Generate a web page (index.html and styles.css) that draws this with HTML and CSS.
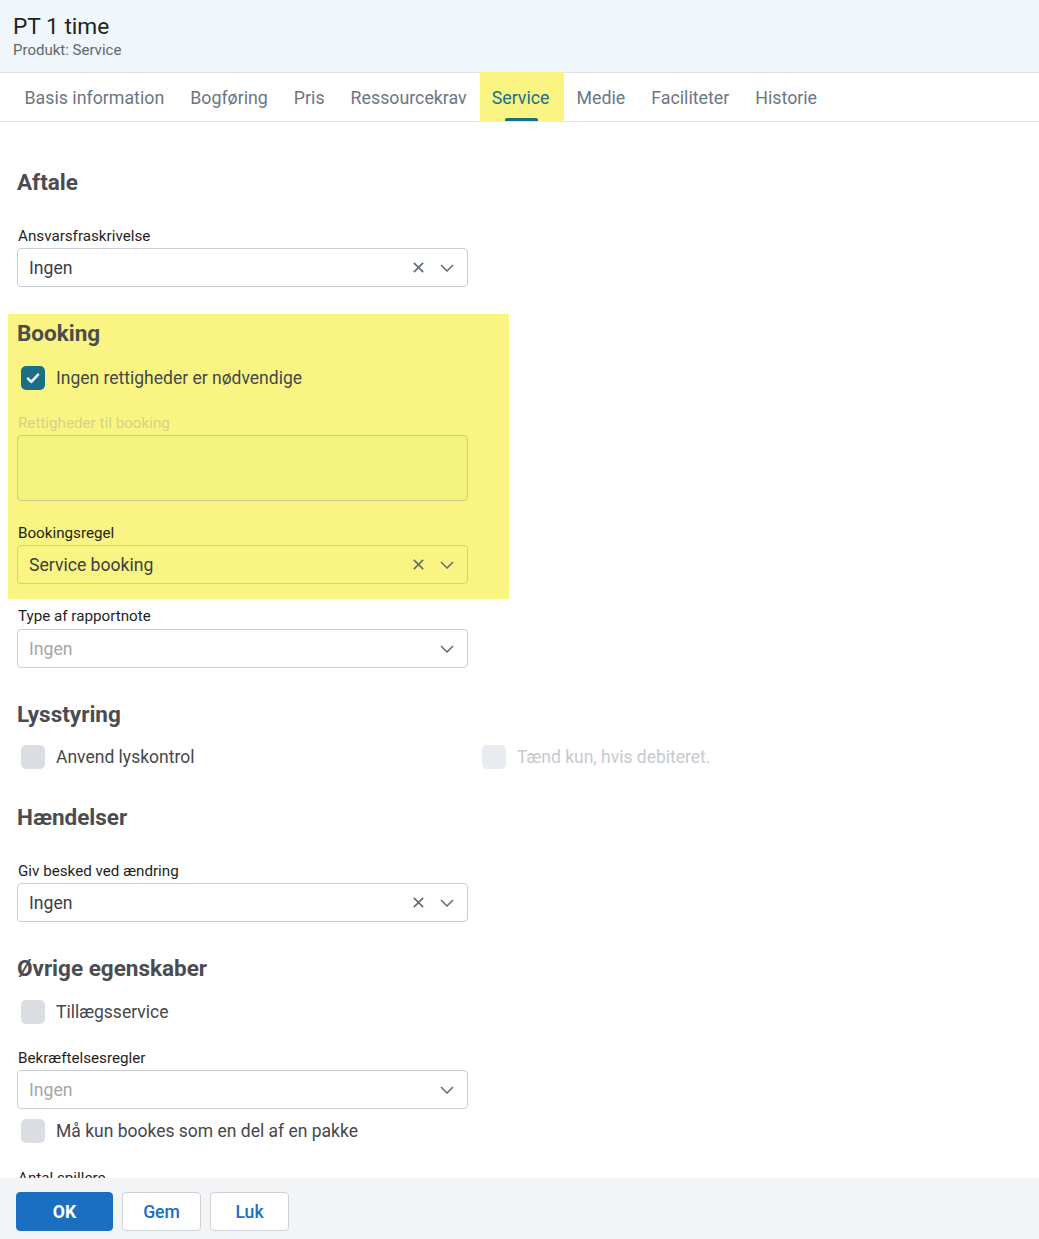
FILE: index.html
```html
<!DOCTYPE html>
<html lang="da">
<head>
  <meta charset="UTF-8" />
  <meta name="viewport" content="width=device-width, initial-scale=1.0" />
  <title>PT 1 time</title>
  <link rel="stylesheet" href="styles.css">
</head>
<body>
  <header class="page-head">
    <div class="page-title">PT 1 time</div>
    <div class="page-sub">Produkt: Service</div>
  </header>

  <nav class="tabs">
    <div class="tab">Basis information</div>
    <div class="tab">Bogføring</div>
    <div class="tab">Pris</div>
    <div class="tab">Ressourcekrav</div>
    <div class="tab active">Service</div>
    <div class="tab">Medie</div>
    <div class="tab">Faciliteter</div>
    <div class="tab">Historie</div>
  </nav>

  <main class="content">
    <h2 class="section-title first">Aftale</h2>
    <label class="field-label gap-31">Ansvarsfraskrivelse</label>
    <div class="select">
      <span class="select-value">Ingen</span>
      <svg class="icon-x" viewBox="0 0 14 14"><path d="M2 2 L12 12 M12 2 L2 12" /></svg>
      <svg class="icon-chevron" viewBox="0 0 14 8"><path d="M1 1 L7 7 L13 1" /></svg>
    </div>

    <!-- fremhævet blok -->
    <section class="highlight">
      <h2 class="section-title">Booking</h2>
      <div class="check-row gap-19">
        <span class="checkbox checked">
          <svg viewBox="0 0 16 16"><path d="M3.5 8.5 L6.5 11.5 L12.5 5" /></svg>
        </span>
        <span class="check-label">Ingen rettigheder er nødvendige</span>
      </div>
      <label class="field-label disabled gap-24">Rettigheder til booking</label>
      <div class="textarea"></div>
      <label class="field-label gap-23">Bookingsregel</label>
      <div class="select transparent">
        <span class="select-value">Service booking</span>
        <svg class="icon-x" viewBox="0 0 14 14"><path d="M2 2 L12 12 M12 2 L2 12" /></svg>
        <svg class="icon-chevron" viewBox="0 0 14 8"><path d="M1 1 L7 7 L13 1" /></svg>
      </div>
    </section>

    <label class="field-label gap-8">Type af rapportnote</label>
    <div class="select mt-4">
      <span class="select-value placeholder">Ingen</span>
      <svg class="icon-chevron" viewBox="0 0 14 8"><path d="M1 1 L7 7 L13 1" /></svg>
    </div>

    <h2 class="section-title gap-32">Lysstyring</h2>
    <div class="check-grid gap-17">
      <div class="check-row">
        <span class="checkbox"></span>
        <span class="check-label">Anvend lyskontrol</span>
      </div>
      <div class="check-row">
        <span class="checkbox disabled"></span>
        <span class="check-label disabled">Tænd kun, hvis debiteret.</span>
      </div>
    </div>

    <h2 class="section-title gap-34">Hændelser</h2>
    <label class="field-label gap-31">Giv besked ved ændring</label>
    <div class="select">
      <span class="select-value">Ingen</span>
      <svg class="icon-x" viewBox="0 0 14 14"><path d="M2 2 L12 12 M12 2 L2 12" /></svg>
      <svg class="icon-chevron" viewBox="0 0 14 8"><path d="M1 1 L7 7 L13 1" /></svg>
    </div>

    <h2 class="section-title gap-32">Øvrige egenskaber</h2>
    <div class="check-row gap-18">
      <span class="checkbox"></span>
      <span class="check-label">Tillægsservice</span>
    </div>
    <label class="field-label gap-25">Bekræftelsesregler</label>
    <div class="select">
      <span class="select-value placeholder">Ingen</span>
      <svg class="icon-chevron" viewBox="0 0 14 8"><path d="M1 1 L7 7 L13 1" /></svg>
    </div>
    <div class="check-row gap-10">
      <span class="checkbox"></span>
      <span class="check-label">Må kun bookes som en del af en pakke</span>
    </div>
    <label class="field-label gap-26">Antal spillere</label>
  </main>

  <footer class="actions">
    <button class="btn primary">OK</button>
    <button class="btn">Gem</button>
    <button class="btn">Luk</button>
  </footer>
</body>
</html>
```

FILE: styles.css
```css
:root {
  --text: #333;
  --heading: #4a4c50;
  --tab-text: #6b7684;
  --teal: #1b6e86;
  --blue: #1a6fc2;
  --border: #c9cdd3;
  --yellow: #faf582;
}

html, body {
  margin: 0;
  padding: 0;
  height: 100%;
}

body {
  display: flex;
  flex-direction: column;
  height: 100vh;
  overflow: hidden;
  background: #fff;
  color: var(--text);
  font-family: Roboto, "Liberation Sans", sans-serif;
}

.page-head {
  background: #f0f7fc;
  border-bottom: 1px solid #dde3e9;
  padding: 13px 13px 0;
  height: 59px;
  flex: none;
}

.page-title {
  font-size: 22.7px;
  line-height: 28px;
  color: #222;
}

.page-sub {
  font-size: 15px;
  line-height: 18px;
  color: #666;
  margin-top: 0;
}

.tabs {
  display: flex;
  padding-left: 11.5px;
  height: 48px;
  border-bottom: 1px solid #e3e6ea;
  flex: none;
}

.tab {
  position: relative;
  padding: 0 13px;
  font-size: 17.8px;
  line-height: 51px;
  color: var(--tab-text);
  margin-top: -1px;
  height: 49px;
}

.tab.active {
  background: var(--yellow);
  color: var(--teal);
  padding: 0 14px 0 12px;
}

/* markering under aktiv fane */
.tab.active::after {
  content: "";
  position: absolute;
  left: 25px;
  bottom: 0;
  width: 33px;
  height: 3px;
  border-radius: 2px 2px 0 0;
  background: var(--teal);
}

.content {
  flex: 1;
  overflow: hidden;
  display: flex;
  flex-direction: column;
  align-items: flex-start;
  padding-left: 17px;
}

.content > *,
.highlight > * {
  flex-shrink: 0;
}

.section-title {
  margin: 0;
  font-size: 22.5px;
  line-height: 28px;
  font-weight: 700;
  color: var(--heading);
}

.section-title.first {
  margin-top: 46px;
}

.field-label {
  display: block;
  margin-left: 1px;
  font-size: 15.2px;
  line-height: 18px;
  font-weight: 400;
  color: #1f1f1f;
}

.field-label.disabled {
  color: #d3d38a;
}

.select {
  box-sizing: border-box;
  width: 451px;
  height: 39px;
  margin-top: 3px;
  display: flex;
  align-items: center;
  padding: 0 12px 0 11px;
  border: 1px solid var(--border);
  border-radius: 4px;
  background: #fff;
}

.select.transparent {
  background: transparent;
  border-color: #cfcf8c;
}

.select-value {
  flex: 1;
  font-size: 17.6px;
  color: #3b3e43;
}

.select-value.placeholder {
  color: #a3a6aa;
}

.icon-x {
  width: 13px;
  height: 13px;
  margin-right: 15px;
  fill: none;
  stroke: #5f6b79;
  stroke-width: 1.7;
}

.icon-chevron {
  width: 14px;
  height: 8px;
  margin-right: 1px;
  fill: none;
  stroke: #5f6b79;
  stroke-width: 1.5;
}

.highlight {
  display: flex;
  flex-direction: column;
  align-items: flex-start;
  box-sizing: border-box;
  width: 501px;
  margin: 27px 0 0 -9px;
  padding: 5px 0 15px 9px;
  background: var(--yellow);
}

.textarea {
  box-sizing: border-box;
  width: 451px;
  height: 66px;
  margin-top: 3px;
  border: 1px solid #cdcd8a;
  border-radius: 4px;
  background: #f2f37d;
}

.check-grid {
  display: grid;
  grid-template-columns: 461px 1fr;
  width: 100%;
}

.check-row {
  display: flex;
  align-items: center;
  gap: 11px;
  margin-left: 4px;
}

.checkbox {
  box-sizing: border-box;
  width: 24px;
  height: 24px;
  border-radius: 5px;
  background: #dadee3;
  display: flex;
  align-items: center;
  justify-content: center;
}

.checkbox.checked {
  background: var(--teal);
}

.checkbox.disabled {
  background: #e8ebef;
}

.checkbox svg {
  width: 18px;
  height: 18px;
  fill: none;
  stroke: #fff;
  stroke-width: 2.2;
  stroke-linecap: round;
  stroke-linejoin: round;
}

.check-label {
  font-size: 17.5px;
  line-height: 24px;
  color: #45474d;
}

.check-label.disabled {
  color: #c5cad1;
}

.gap-8 { margin-top: 8px; }
.gap-10 { margin-top: 10px; }
.gap-17 { margin-top: 17px; }
.gap-18 { margin-top: 18px; }
.gap-19 { margin-top: 19px; }
.gap-23 { margin-top: 23px; }
.gap-24 { margin-top: 24px; }
.gap-25 { margin-top: 25px; }
.gap-26 { margin-top: 26px; }
.gap-31 { margin-top: 31px; }
.gap-32 { margin-top: 32px; }
.gap-34 { margin-top: 34px; }
.mt-4 { margin-top: 4px; }

.actions {
  flex: none;
  height: 61px;
  box-sizing: border-box;
  padding: 14px 16px 0;
  display: flex;
  align-items: flex-start;
  gap: 9px;
  background: #f3f4f6;
}

.btn {
  height: 39px;
  min-width: 79px;
  padding: 0 20px;
  border: 1px solid #cfd3d8;
  border-radius: 4px;
  background: #fff;
  color: var(--blue);
  font-family: Roboto, "Liberation Sans", sans-serif;
  font-size: 17.6px;
  font-weight: 500;
}

.btn.primary {
  width: 97px;
  border-color: var(--blue);
  background: var(--blue);
  color: #fff;
  font-weight: 700;
}
```
